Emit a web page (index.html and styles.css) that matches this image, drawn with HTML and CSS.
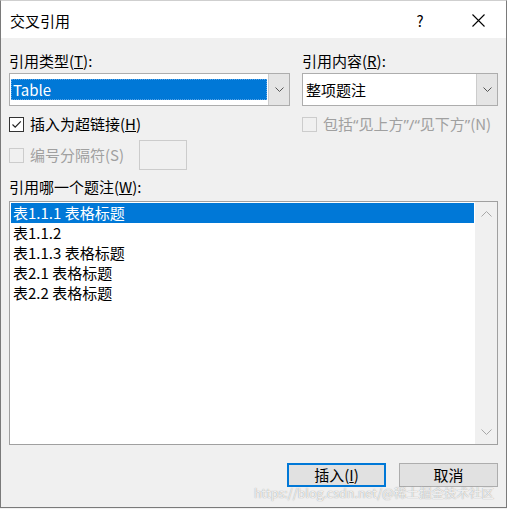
FILE: index.html
```html
<!DOCTYPE html>
<html>
<head>
<meta charset="utf-8">
<link rel="stylesheet" href="styles.css">
</head>
<body>
<div class="window">
  <div class="titlebar">
    <span class="title">交叉引用</span>
    <span class="help">?</span>
    <svg class="close" width="13" height="13" viewBox="0 0 13 13"><path d="M0.5 0.5L12.5 12.5M12.5 0.5L0.5 12.5" stroke="#000" stroke-width="1.1" fill="none"/></svg>
  </div>
  <div class="content">
    <div class="grid labels">
      <div class="label">引用类型(<u>T</u>):</div>
      <div class="label">引用内容(<u>R</u>):</div>
    </div>
    <div class="grid combos">
      <div class="combo">
        <div class="field"><span class="sel">Table</span></div>
        <div class="drop"><svg width="9" height="5" viewBox="0 0 9 5"><path d="M0.5 0.5L4.5 4.5L8.5 0.5" stroke="#555" fill="none"/></svg></div>
      </div>
      <div class="combo">
        <div class="field plain">整项题注</div>
        <div class="drop"><svg width="9" height="5" viewBox="0 0 9 5"><path d="M0.5 0.5L4.5 4.5L8.5 0.5" stroke="#555" fill="none"/></svg></div>
      </div>
    </div>
    <div class="grid checks">
      <div class="check">
        <span class="box on"><svg width="11" height="11" viewBox="0 0 11 11"><path d="M1.5 5.5L4.2 8.2L9.8 2.3" stroke="#222" stroke-width="1.2" fill="none"/></svg></span>
        <span>插入为超链接(<u>H</u>)</span>
      </div>
      <div class="check disabled">
        <span class="box"></span>
        <span>包括<span class="q">“</span>见上方<span class="q">”/“</span>见下方<span class="q">”</span>(N)</span>
      </div>
    </div>
    <div class="sep-row">
      <div class="check disabled sep-label">
        <span class="box"></span>
        <span>编号分隔符(S)</span>
      </div>
      <div class="textbox"></div>
    </div>
    <div class="label which">引用哪一个题注(<u>W</u>):</div>
    <div class="listbox">
      <div class="items">
        <div class="item selected">表1.1.1 表格标题</div>
        <div class="item">表1.1.2</div>
        <div class="item">表1.1.3 表格标题</div>
        <div class="item">表2.1 表格标题</div>
        <div class="item">表2.2 表格标题</div>
      </div>
      <div class="scrollbar">
        <svg width="11" height="6" viewBox="0 0 11 6"><path d="M0.5 5.5L5.5 0.5L10.5 5.5" stroke="#a8a8a8" fill="none"/></svg>
        <svg width="11" height="6" viewBox="0 0 11 6"><path d="M0.5 0.5L5.5 5.5L10.5 0.5" stroke="#a8a8a8" fill="none"/></svg>
      </div>
    </div>
    <div class="buttons">
      <div class="btn default">插入(<u>I</u>)</div>
      <div class="btn">取消</div>
    </div>
  </div>
  <div class="watermark">https://blog.csdn.net/@稀土掘金技术社区</div>
</div>
</body>
</html>
```

FILE: styles.css
```css
* { box-sizing: border-box; }
html, body { margin: 0; padding: 0; background: #f0f0f0; }
body {
  font-family: "Noto Sans CJK SC", "Noto Sans", sans-serif;
  font-size: 15px;
  color: #000;
}
.window {
  position: relative;
  width: 507px;
  height: 508px;
  border: 1px solid #7a7a7a;
  border-top-color: #cfcfcf;
  background: #f0f0f0;
  display: flex;
  flex-direction: column;
  overflow: hidden;
}
.titlebar {
  height: 37px;
  background: #fff;
  display: flex;
  align-items: center;
  padding-left: 9px;
  padding-top: 2px;
}
.title { line-height: 20px; flex: 1; }
.help { width: 12px; line-height: 20px; font-size: 15px; margin-right: 46px; text-align: center; }
.close { margin-right: 21px; margin-top: -1px; }
.content { padding: 0 8px; display: flex; flex-direction: column; }
.grid {
  display: grid;
  grid-template-columns: 281px 196px;
  column-gap: 12px;
}
.label { line-height: 20px; white-space: nowrap; }
.labels { margin-top: 13px; }
.combos { margin-top: 2px; }
.combo {
  height: 33px;
  border: 1px solid #adadad;
  background: #fff;
  display: flex;
}
.field {
  flex: 1;
  display: flex;
  align-items: center;
  padding: 0 1px;
}
.field.plain { padding-left: 3px; line-height: 20px; }
.sel {
  width: 100%;
  height: 21px;
  line-height: 21px;
  background: #0078d7;
  color: #fff;
  padding-left: 2px;
  outline: 1px dotted #5aa4e6;
  outline-offset: -1px;
}
.drop {
  width: 21px;
  background: #e5e5e5;
  border-left: 1px solid #cccccc;
  display: flex;
  align-items: center;
  justify-content: center;
}
.checks { margin-top: 8px; }
.check {
  display: flex;
  align-items: center;
  height: 20px;
  line-height: 20px;
  white-space: nowrap;
}
.q { font-family: "Noto Sans", "Liberation Sans", sans-serif; }
.box {
  flex-shrink: 0;
  width: 15px;
  height: 15px;
  border: 1px solid #333;
  background: #fff;
  margin-right: 6px;
  display: flex;
  align-items: center;
  justify-content: center;
}
.check.disabled { color: #a0a0a0; }
.check.disabled .box { border-color: #cccccc; background: #f0f0f0; }
.sep-row {
  display: flex;
  align-items: center;
  height: 30px;
  margin-top: 6px;
}
.sep-label { width: 130px; }
.textbox {
  width: 48px;
  height: 30px;
  border: 1px solid #cccccc;
  background: #f0f0f0;
}
.which { margin-top: 7px; }
.listbox {
  margin-top: 4px;
  height: 244px;
  border: 1px solid #a0a0a0;
  background: #fff;
  display: flex;
}
.items { flex: 1; padding: 1px; }
.item { height: 20px; line-height: 20px; padding-left: 2px; white-space: nowrap; }
.item.selected { background: #0078d7; color: #fff; }
.scrollbar {
  width: 22px;
  background: #f0f0f0;
  display: flex;
  flex-direction: column;
  align-items: center;
  justify-content: space-between;
  padding: 9px 0 9px;
}
.buttons {
  display: flex;
  justify-content: flex-end;
  gap: 13px;
  margin-top: 18px;
}
.btn {
  width: 99px;
  height: 24px;
  border: 1px solid #adadad;
  background: #e1e1e1;
  display: flex;
  align-items: center;
  justify-content: center;
  line-height: 20px;
}
.btn.default { border: 2px solid #0078d7; }
.watermark {
  position: absolute;
  left: 253px;
  top: 485px;
  font-size: 12.5px;
  line-height: 14px;
  color: rgba(255,255,255,0.85);
  text-shadow: 0 0 1px rgba(90,90,90,0.7);
  white-space: nowrap;
}
```
